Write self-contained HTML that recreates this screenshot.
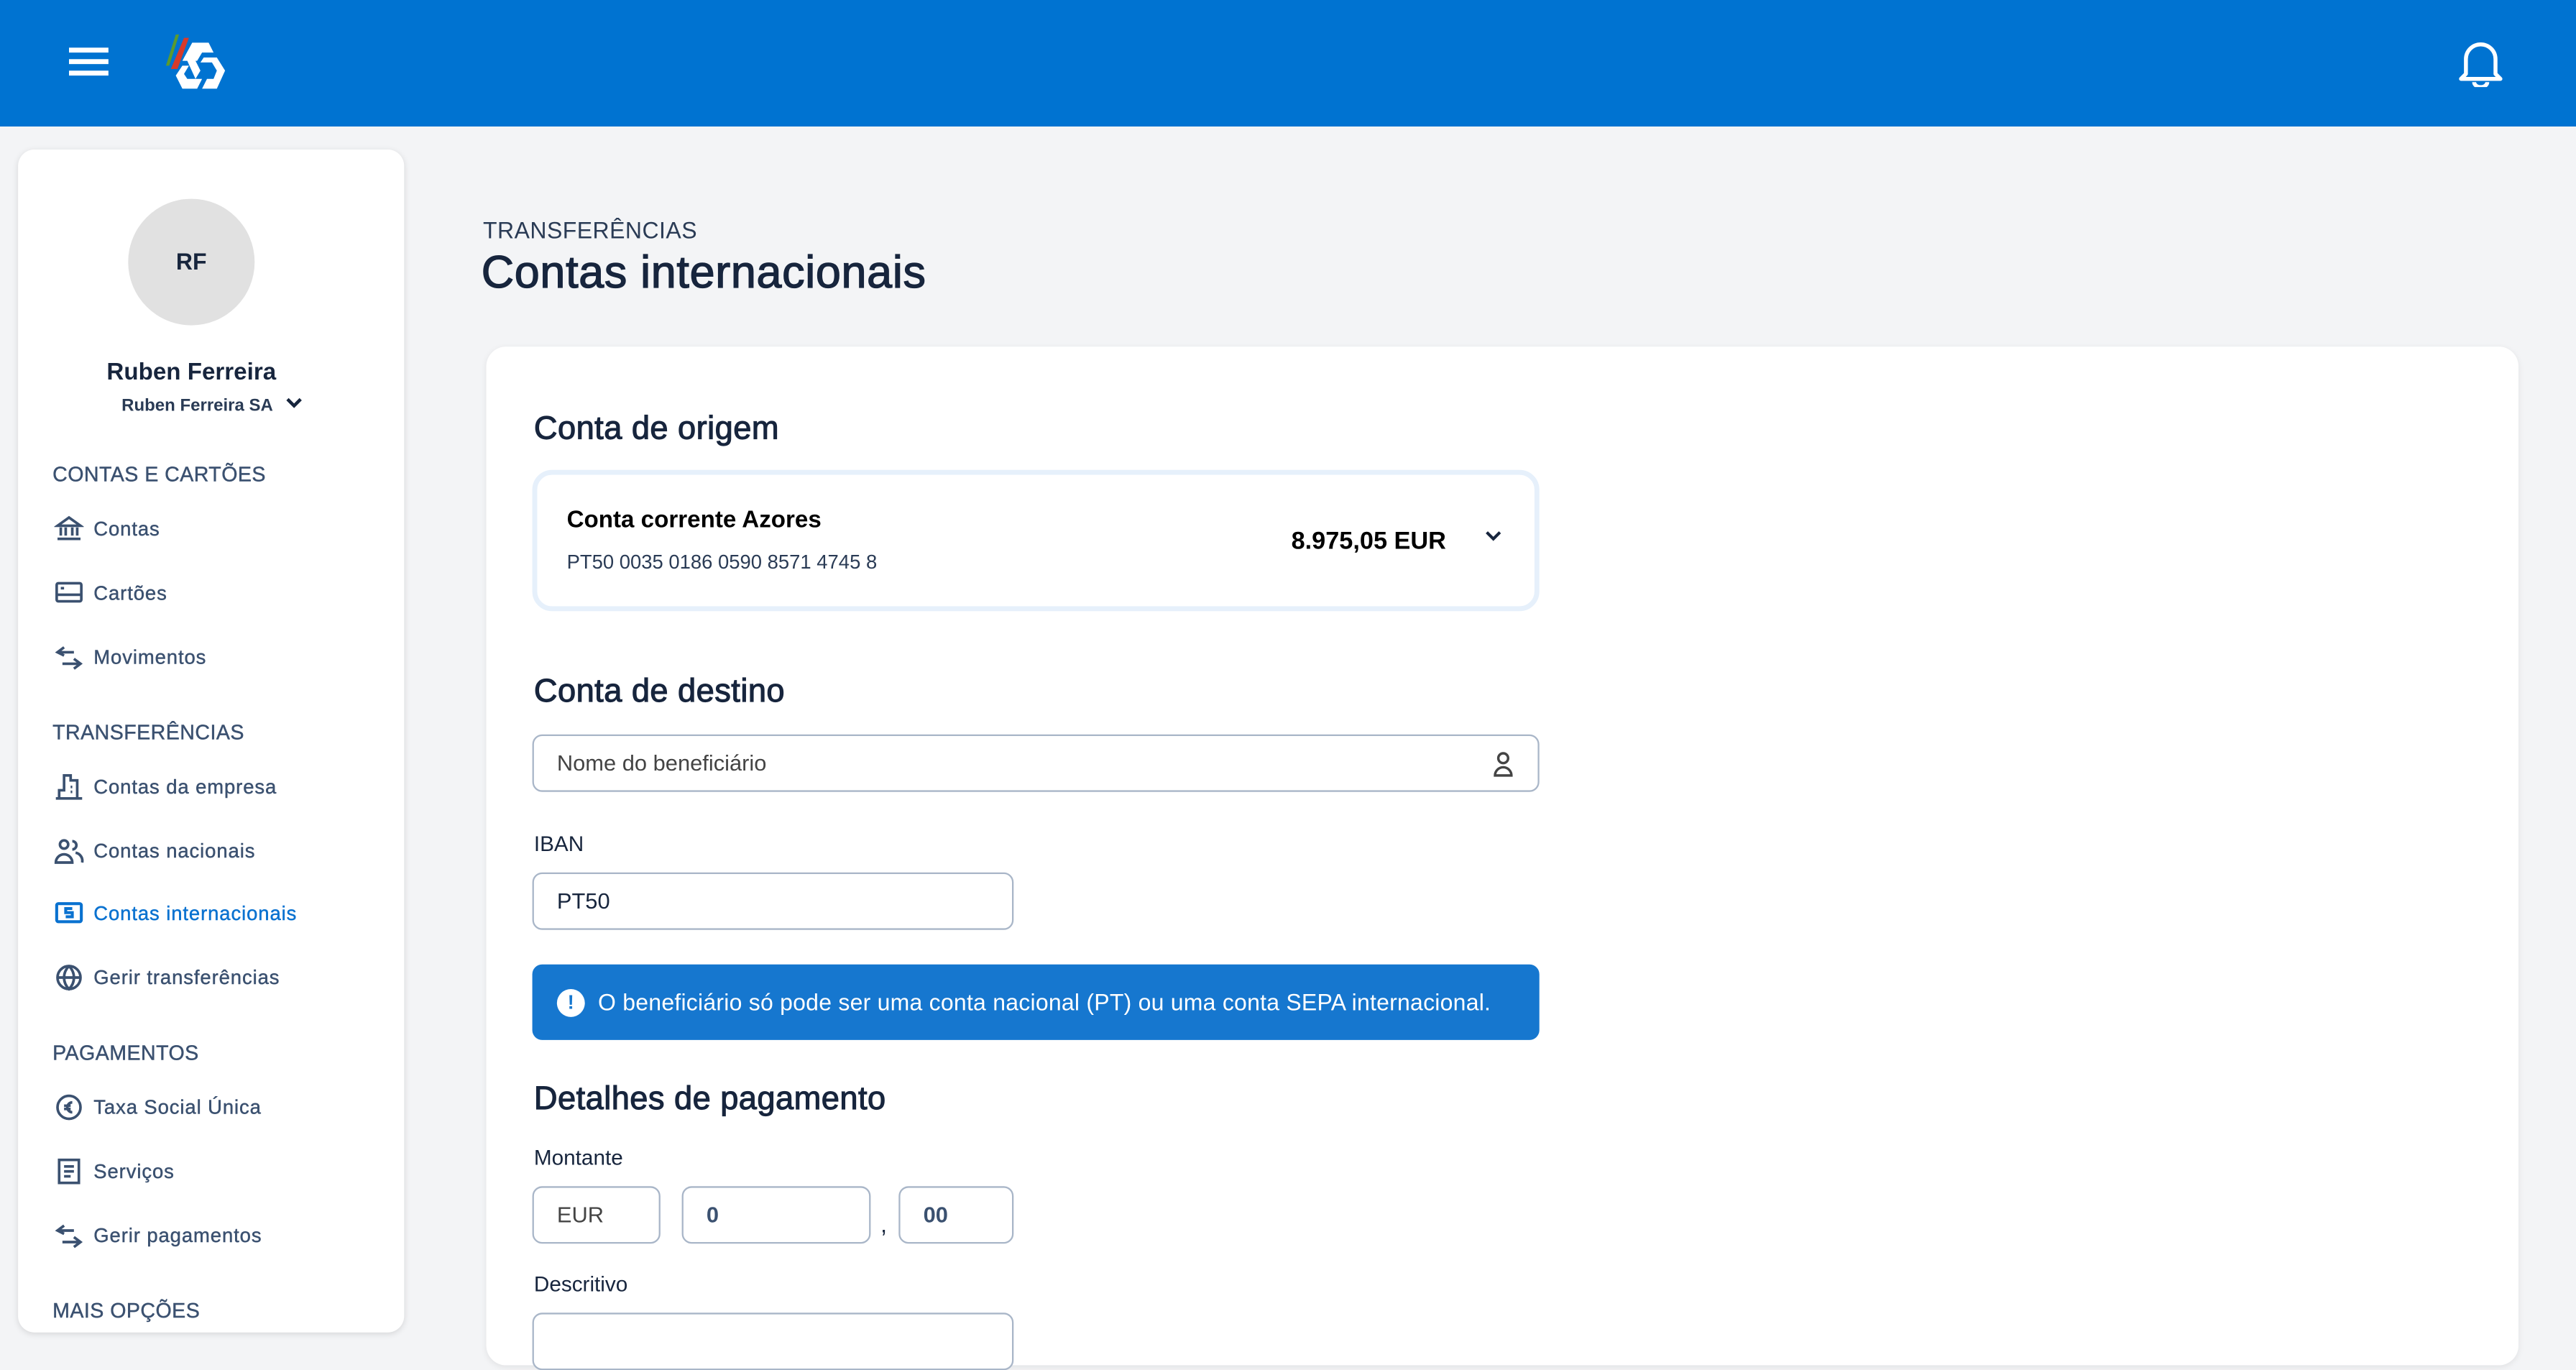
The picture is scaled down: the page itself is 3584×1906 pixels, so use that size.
<!DOCTYPE html>
<html><head><meta charset="utf-8"><style>
html,body{margin:0;padding:0;width:3584px;height:1868px;overflow:hidden;background:#f3f4f6}
#w{position:absolute;left:0;top:0;width:1568px;height:817.3px;transform:scale(2.285714);transform-origin:0 0;font-family:"Liberation Sans",sans-serif;color:#17253d}
.hdr{position:absolute;left:0;top:0;width:1568px;height:77px;background:#0073d1}
.side{position:absolute;left:11px;top:91px;width:235px;height:720px;background:#fff;border-radius:10px;box-shadow:0 1px 4px rgba(0,0,0,.12)}
.av{position:absolute;left:67px;top:30px;width:77px;height:77px;border-radius:50%;background:#e1e1e1;text-align:center;line-height:77px;font-weight:bold;font-size:14px;color:#17253d}
.sec{position:absolute;left:21px;font-size:12.5px;color:#3b5170;letter-spacing:.2px;-webkit-text-stroke:.2px #3b5170}
.it{position:absolute;left:22px;font-size:12px;color:#3b5170;letter-spacing:.4px;display:flex;align-items:center;-webkit-text-stroke:.2px #3b5170}
.it svg{width:18px;height:18px;margin-right:6px}
.card{position:absolute;left:296px;top:211px;width:1237px;height:620px;background:#fff;border-radius:12px;box-shadow:0 1px 4px rgba(0,0,0,.08)}
.h2{position:absolute;left:29px;font-size:19.8px;color:#17253d;letter-spacing:.2px;-webkit-text-stroke:.5px #17253d}
.inp{position:absolute;border:1px solid #a9b6c8;border-radius:6px;background:#fff;box-sizing:border-box;font-size:13.5px;padding-left:14px;display:flex;align-items:center;color:#17253d}
.lbl{position:absolute;left:29px;font-size:13px;color:#17253d}
</style></head><body><div id="w">
<div class="hdr">
<div style="position:absolute;left:42px;top:29px;width:24px;height:3px;background:#fff;box-shadow:0 7px 0 #fff,0 14px 0 #fff"></div>
<svg style="position:absolute;left:96px;top:18px" width="46" height="38" viewBox="0 0 46 38">
<path d="M5 22 L11 3 L13 3 L7 22Z" fill="#5a9a2f"/><path d="M8 24 L16 5 L19 5 L12 24Z" fill="#d83a2a"/>
<path d="M15 19 L21 8 L31 8 L34 14 L27 14 L24 19 Z" fill="#fff"/>
<path d="M28 17 L36 17 L41 25 L36 36 L27 36 L30 30 L34 30 L36 25 L33 20 L26 20Z" fill="#fff"/>
<path d="M15 22 L11 28 L15 36 L24 36 L27 30 L18 30 L16 27 L19 22Z" fill="#fff"/>
<path d="M18 19 L22 17 L26 25 L23 30 Z" fill="#fff"/>
</svg>
<svg style="position:absolute;left:1496px;top:24px" width="28" height="29" viewBox="0 0 28 29" fill="none" stroke="#fff" stroke-width="2.4"><path d="M5 21 L5 12 a9 9 0 0 1 18 0 L23 21 L26 24 L2 24Z" stroke-linejoin="round"/><path d="M10 26 a4 3 0 0 0 8 0"/></svg>
</div>
<div class="side">
<div class="av">RF</div>
<div style="position:absolute;left:0;width:211px;top:128px;text-align:center;font-weight:bold;font-size:14.5px">Ruben Ferreira</div>
<div style="position:absolute;left:63px;top:150px;font-size:10.5px;font-weight:bold;color:#2a3b55">Ruben Ferreira SA</div>
<svg style="position:absolute;left:162px;top:150px" width="12" height="9" viewBox="0 0 12 9"><path d="M2 2 L6 6 L10 2" fill="none" stroke="#17253d" stroke-width="2"/></svg>
<div class="sec" style="top:191px">CONTAS E CARTÕES</div>
<div class="it" style="top:222px"><svg viewBox="0 0 18 18" fill="none" stroke="#3b5170" stroke-width="1.6"><path d="M2 7 L9 2 L16 7Z M4 8 V13 M7 8V13 M11 8V13 M14 8V13 M2 15 H16"/></svg>Contas</div>
<div class="it" style="top:261px"><svg viewBox="0 0 18 18" fill="none" stroke="#3b5170" stroke-width="1.6"><rect x="1.5" y="3" width="15" height="11" rx="1"/><path d="M1.5 10 H16.5 M4 6 H6"/></svg>Cartões</div>
<div class="it" style="top:300px"><svg viewBox="0 0 18 18" fill="none" stroke="#3b5170" stroke-width="1.6"><path d="M6 3 L2 6 L6 8 M2 6 H12 M12 10 L16 13 L12 16 M16 13 H5"/></svg>Movimentos</div>
<div class="sec" style="top:348px">TRANSFERÊNCIAS</div>
<div class="it" style="top:379px"><svg viewBox="0 0 18 18" fill="none" stroke="#3b5170" stroke-width="1.6"><path d="M1 16 H17 M3 16 V11 H6 V2 H10 V5 H14 V16 M10 9 H11 M10 12 H11"/></svg>Contas da empresa</div>
<div class="it" style="top:418px"><svg viewBox="0 0 18 18" fill="none" stroke="#3b5170" stroke-width="1.6"><circle cx="6" cy="5" r="2.5"/><path d="M1 16 a5 5 0 0 1 10 0Z M11 3 a2.5 2.5 0 0 1 0 5 M13 10 a5 5 0 0 1 4 6"/></svg>Contas nacionais</div>
<div class="it" style="top:456px;color:#0a72d0;-webkit-text-stroke:.2px #0a72d0"><svg viewBox="0 0 18 18" fill="none" stroke="#0a72d0" stroke-width="1.8"><rect x="1.5" y="3" width="15" height="11" rx="1"/><path d="M11 6 H7 V8.5 H11 V11 H7"/></svg>Contas internacionais</div>
<div class="it" style="top:495px"><svg viewBox="0 0 18 18" fill="none" stroke="#3b5170" stroke-width="1.6"><circle cx="9" cy="9" r="7"/><path d="M2 9 H16 M9 2 C5 6 5 12 9 16 C13 12 13 6 9 2"/></svg>Gerir transferências</div>
<div class="sec" style="top:543px">PAGAMENTOS</div>
<div class="it" style="top:574px"><svg viewBox="0 0 18 18" fill="none" stroke="#3b5170" stroke-width="1.6"><circle cx="9" cy="9" r="7"/><path d="M11 6 a3 3 0 1 0 0 6 M6 8 H10 M6 10 H10"/></svg>Taxa Social Única</div>
<div class="it" style="top:613px"><svg viewBox="0 0 18 18" fill="none" stroke="#3b5170" stroke-width="1.6"><path d="M3 2 H15 V16 H3Z M6 6 H12 M6 9 H12 M6 12 H10"/></svg>Serviços</div>
<div class="it" style="top:652px"><svg viewBox="0 0 18 18" fill="none" stroke="#3b5170" stroke-width="1.6"><path d="M6 3 L2 6 L6 8 M2 6 H12 M12 10 L16 13 L12 16 M16 13 H5"/></svg>Gerir pagamentos</div>
<div class="sec" style="top:700px">MAIS OPÇÕES</div>
</div>
<div style="position:absolute;left:294px;top:132px;font-size:14px;color:#2a3b55;letter-spacing:.2px">TRANSFERÊNCIAS</div>
<div style="position:absolute;left:293px;top:150px;font-size:27.5px;color:#17253d;letter-spacing:.3px;-webkit-text-stroke:.6px #17253d">Contas internacionais</div>
<div class="card">
<div class="h2" style="top:39px">Conta de origem</div>
<div style="position:absolute;left:28px;top:75px;width:613px;height:86px;box-sizing:border-box;border:3px solid #e6f0fb;border-radius:12px;background:#fff">
<div style="position:absolute;left:18px;top:20px;font-weight:bold;font-size:14.5px;color:#000">Conta corrente Azores</div>
<div style="position:absolute;left:18px;top:46px;font-size:12px;color:#2a3b55">PT50 0035 0186 0590 8571 4745 8</div>
<div style="position:absolute;left:459px;top:32px;font-weight:bold;font-size:15px;color:#000">8.975,05 EUR</div>
<svg style="position:absolute;left:576px;top:33px" width="12" height="9" viewBox="0 0 12 9"><path d="M2 2 L6 6 L10 2" fill="none" stroke="#17253d" stroke-width="1.8"/></svg>
</div>
<div class="h2" style="top:199px">Conta de destino</div>
<div class="inp" style="left:28px;top:236px;width:613px;height:35px;color:#444">Nome do beneficiário
<svg style="position:absolute;right:14px;top:9px" width="14" height="17" viewBox="0 0 14 17" fill="none" stroke="#444" stroke-width="1.5"><circle cx="7" cy="4.5" r="3"/><path d="M2 15 a5 5 0 0 1 10 0Z"/></svg></div>
<div class="lbl" style="top:295px">IBAN</div>
<div class="inp" style="left:28px;top:320px;width:293px;height:35px">PT50</div>
<div style="position:absolute;left:28px;top:376px;width:613px;height:46px;background:#1677cf;border-radius:6px;color:#fff;font-size:14px;display:flex;align-items:center;letter-spacing:.1px">
<div style="width:17px;height:17px;border-radius:50%;background:#fff;color:#1677cf;font-weight:bold;font-size:12px;text-align:center;line-height:17px;margin:0 8px 0 15px">!</div>O beneficiário só pode ser uma conta nacional (PT) ou uma conta SEPA internacional.</div>
<div class="h2" style="top:447px">Detalhes de pagamento</div>
<div class="lbl" style="top:486px">Montante</div>
<div class="inp" style="left:28px;top:511px;width:78px;height:35px;color:#444">EUR</div>
<div class="inp" style="left:119px;top:511px;width:115px;height:35px;font-weight:bold;color:#3b5170">0</div>
<div style="position:absolute;left:240px;top:526px;font-size:14px">,</div>
<div class="inp" style="left:251px;top:511px;width:70px;height:35px;font-weight:bold;color:#3b5170">00</div>
<div class="lbl" style="top:563px">Descritivo</div>
<div class="inp" style="left:28px;top:588px;width:293px;height:35px"></div>
</div>
</div></body></html>
